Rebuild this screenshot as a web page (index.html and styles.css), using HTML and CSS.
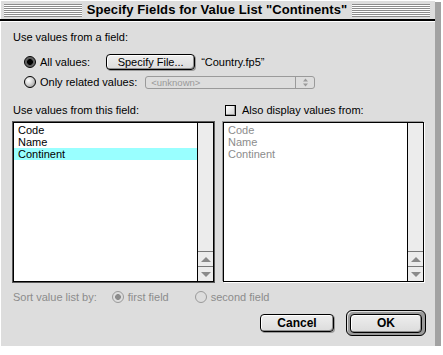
FILE: index.html
```html
<!DOCTYPE html>
<html lang="en">
<head>
    <meta charset="UTF-8">
    <title>Specify Fields for Value List</title>
    <link rel="stylesheet" href="styles.css">
</head>
<body>

<div class="window">
    <div class="titlebar">
        <div class="stripes"></div>
        <div class="title">Specify Fields for Value List "Continents"</div>
        <div class="stripes"></div>
    </div>

    <div class="content">
        <div class="label">Use values from a field:</div>

        <div class="row row-all">
            <span class="radio on"></span>
            <span class="radio-text">All values:</span>
            <button class="btn specify-btn">Specify File...</button>
            <span class="filename">“Country.fp5”</span>
        </div>

        <div class="row row-related">
            <span class="radio"></span>
            <span class="radio-text">Only related values:</span>
            <div class="popup">
                <span class="popup-text">&lt;unknown&gt;</span>
                <span class="popup-arrows">
                    <svg width="7" height="9" viewBox="0 0 7 9">
                        <path d="M3.5 0.5 L6 3.5 H1 Z M3.5 8.5 L6 5.5 H1 Z" fill="#9a9a9a"/>
                    </svg>
                </span>
            </div>
        </div>

        <div class="lists">
            <div class="column">
                <div class="label list-label">Use values from this field:</div>
                <div class="listbox focused">
                    <ul class="items">
                        <li>Code</li>
                        <li>Name</li>
                        <li class="selected">Continent</li>
                    </ul>
                    <div class="scrollbar">
                        <div class="track"></div>
                        <div class="arrow"><span class="tri up"></span></div>
                        <div class="arrow"><span class="tri down"></span></div>
                    </div>
                </div>
            </div>
            <div class="column">
                <div class="label list-label"><span class="checkbox"></span>Also display values from:</div>
                <div class="listbox">
                    <ul class="items dim">
                        <li>Code</li>
                        <li>Name</li>
                        <li>Continent</li>
                    </ul>
                    <div class="scrollbar">
                        <div class="track"></div>
                        <div class="arrow"><span class="tri up"></span></div>
                        <div class="arrow"><span class="tri down"></span></div>
                    </div>
                </div>
            </div>
        </div>

        <div class="sort-row">
            <span class="sort-label">Sort value list by:</span>
            <span class="radio disabled on first-radio"></span>
            <span class="radio-text">first field</span>
            <span class="radio disabled second-radio"></span>
            <span class="radio-text">second field</span>
        </div>

        <div class="buttons">
            <button class="btn cancel-btn">Cancel</button>
            <div class="default-ring">
                <button class="btn ok-btn">OK</button>
            </div>
        </div>
    </div>
</div>

</body>
</html>
```

FILE: styles.css
```css
body {
    margin: 0;
    background: #ffffff;
    font-family: 'Liberation Sans', Arial, sans-serif;
    font-size: 11px;
    color: #000;
}

.window {
    width: 435px;
    height: 346px;
    background-color: #dddddd;
    box-shadow: 4px 4px 0 2px #a2a2a2;
    display: flex;
    flex-direction: column;
}

/* title bar */
.titlebar {
    height: 19px;
    border-bottom: 2px solid #000;
    display: flex;
    align-items: center;
    padding: 0 5px 0 4px;
    box-shadow: inset 1px 1px 0 #fff;
}

.stripes {
    flex: 1;
    height: 13px;
    margin-top: 1px;
    background: repeating-linear-gradient(to bottom, #8c8c8c 0 1px, #ffffff 1px 2px);
    background-size: 100% 14px;
}

.title {
    font-weight: bold;
    font-size: 13px;
    padding: 0 5px;
    letter-spacing: 0.1px;
}

/* dialog body */
.content {
    flex: 1;
    padding: 9px 11px 8px 13px;
    box-shadow: inset 1px 1px 0 #fff;
    display: flex;
    flex-direction: column;
}

.label {
    height: 14px;
    line-height: 14px;
}

.row {
    display: flex;
    align-items: center;
}

.row-all {
    margin-top: 9px;
    height: 17px;
    padding-left: 11px;
}

.row-related {
    margin-top: 5px;
    height: 14px;
    padding-left: 11px;
}

.radio {
    width: 12px;
    height: 12px;
    box-sizing: border-box;
    border: 1px solid #000;
    border-radius: 50%;
    background: radial-gradient(circle at 35% 35%, #ffffff 0, #d8d8d8 40%, #8a8a8a 100%);
    position: relative;
    flex: none;
}

.radio.on {
    background: radial-gradient(circle at 50% 50%, #000 0 2.6px, #555 3.2px, #8a8a8a 100%);
}

.radio.disabled {
    border-color: #9a9a9a;
    background: #dddddd;
}

.radio.disabled.on {
    background: radial-gradient(circle, #8c8c8c 0 2.6px, #dddddd 3.2px);
}

.radio-text {
    margin-left: 4px;
}

.btn {
    font-family: 'Liberation Sans', Arial, sans-serif;
    background: linear-gradient(to bottom, #eeeeee, #dcdcdc);
    border: 1px solid #000;
    border-radius: 4px;
    box-shadow: inset 1px 1px 0 #fff, inset -1px -1px 0 #8e8e8e, 1px 1px 0 #9a9a9a;
    padding: 0;
    color: #000;
    cursor: pointer;
}

.specify-btn {
    margin-left: 16px;
    width: 89px;
    height: 16px;
    font-size: 11px;
}

.filename {
    margin-left: 6px;
}

.popup {
    margin-left: 8px;
    width: 170px;
    height: 13px;
    box-sizing: border-box;
    border: 1px solid #9a9a9a;
    border-radius: 3px;
    display: flex;
    align-items: center;
    color: #9a9a9a;
}

.popup-text {
    flex: 1;
    font-size: 9.5px;
    padding-left: 5px;
}

.popup-arrows {
    width: 18px;
    height: 100%;
    border-left: 1px solid #9a9a9a;
    display: flex;
    align-items: center;
    justify-content: center;
}

/* the two field lists */
.lists {
    margin-top: 14px;
    display: flex;
    gap: 9px;
}

.column {
    width: 201px;
    display: flex;
    flex-direction: column;
}

.list-label {
    display: flex;
    align-items: center;
}

.checkbox {
    width: 11px;
    height: 11px;
    box-sizing: border-box;
    border: 1px solid #000;
    background: linear-gradient(to bottom right, #ffffff, #cfcfcf);
    box-shadow: inset -1px -1px 0 #9a9a9a;
    margin-left: 2px;
    margin-right: 6px;
}

.listbox {
    margin-top: 5px;
    height: 160px;
    box-sizing: border-box;
    border: 1px solid #000;
    background: #fff;
    display: flex;
    box-shadow: -1px -1px 0 #9a9a9a, 1px 1px 0 #fff;
}

.listbox.focused {
    box-shadow: 0 0 0 1px #5a5a5a;
}

.items {
    list-style: none;
    margin: 0;
    padding: 1px 0 0;
    flex: 1;
}

.items li {
    height: 12px;
    line-height: 12px;
    padding-left: 4px;
}

.items li.selected {
    background-color: #99ffff;
}

.items.dim {
    color: #8c8c8c;
}

.scrollbar {
    width: 15px;
    border-left: 1px solid #000;
    background: #ececec;
    display: flex;
    flex-direction: column;
}

.track {
    flex: 1;
}

.arrow {
    height: 14px;
    border-top: 1px solid #7a7a7a;
    display: flex;
    align-items: center;
    justify-content: center;
}

.tri {
    width: 0;
    height: 0;
    border-left: 5px solid transparent;
    border-right: 5px solid transparent;
}

.tri.up {
    border-bottom: 5px solid #8a8a8a;
}

.tri.down {
    border-top: 5px solid #8a8a8a;
}

/* sort options */
.sort-row {
    margin-top: 8px;
    height: 14px;
    display: flex;
    align-items: center;
    color: #8c8c8c;
}

.first-radio {
    margin-left: 15px;
}

.second-radio {
    margin-left: 26px;
}

/* bottom buttons */
.buttons {
    margin-top: 6px;
    height: 26px;
    display: flex;
    justify-content: flex-end;
    align-items: center;
    gap: 12px;
    padding-right: 0;
}

.cancel-btn {
    width: 74px;
    height: 18px;
    font-size: 12px;
    font-weight: bold;
}

.default-ring {
    width: 80px;
    height: 26px;
    box-sizing: border-box;
    border: 1px solid #000;
    border-radius: 6px;
    background: #9a9a9a;
    box-shadow: inset 1px 1px 0 #e0e0e0;
    display: flex;
    align-items: center;
    justify-content: center;
    margin-right: -2px;
}

.ok-btn {
    width: 72px;
    height: 19px;
    font-size: 12px;
    font-weight: bold;
}
```
